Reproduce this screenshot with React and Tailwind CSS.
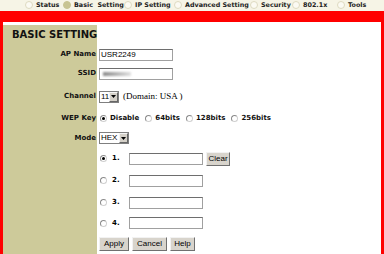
import React from 'react';

const navItems = [
  { label: 'Status', w: 'w-[38px]' },
  { label: 'Basic  Setting', w: 'w-[61px]', active: true },
  { label: 'IP Setting', w: 'w-[50px]' },
  { label: 'Advanced Setting', w: 'w-[76px]' },
  { label: 'Security', w: 'w-[42px]' },
  { label: '802.1x', w: 'w-[45px]' },
  { label: 'Tools', w: 'w-[40px]' },
];

const Radio = ({ checked }) => (
  <span className="w-[7px] h-[7px] rounded-full border border-[#8a8a8a] border-r-[#d0d0d0] border-b-[#d0d0d0] bg-white flex items-center justify-center shrink-0">
    {checked && <span className="w-[3px] h-[3px] rounded-full bg-black" />}
  </span>
);

const TextBox = ({ children, className = '' }) => (
  <div
    className={`w-[74px] h-[12px] bg-white border border-[#a0a0a0] border-t-[#6e6e6e] flex items-center pl-[1px] text-[8px] leading-none text-black font-['Liberation_Sans',sans-serif] ${className}`}
  >
    {children}
  </div>
);

const Select = ({ value, w }) => (
  <div className={`${w} h-[12px] bg-white border border-[#7f7f7f] flex items-center justify-between text-[8px] leading-none font-['Liberation_Sans',sans-serif]`}>
    <span className="pl-[1px]">{value}</span>
    <span className="w-[9px] h-[10px] bg-[#d4d0c8] border border-[#f4f4f4] border-r-[#666] border-b-[#666] flex items-center justify-center">
      <svg width="5" height="3" viewBox="0 0 5 3">
        <path d="M0 0h5L2.5 3z" fill="#000" />
      </svg>
    </span>
  </div>
);

const Btn = ({ children, w }) => (
  <div className={`${w} h-[14px] bg-[#d8d4cc] border border-[#f2f2f2] border-r-[#707070] border-b-[#707070] flex items-center justify-center text-[8px] leading-none text-black font-['Liberation_Sans',sans-serif]`}>
    {children}
  </div>
);

const Row = ({ label, h, children }) => (
  <div className={`flex ${h}`}>
    <div className="w-[94px] bg-[#cdca9a] flex items-center justify-end pr-[1px] text-[7px] font-bold text-[#111] font-['DejaVu_Sans',sans-serif]">
      {label}
    </div>
    <div className="flex-1 flex items-center pl-[2px]">{children}</div>
  </div>
);

const WepOpt = ({ label, checked }) => (
  <span className="flex items-center gap-[3px] mr-[6px]">
    <Radio checked={checked} />
    <span>{label}</span>
  </span>
);

const KeyRow = ({ n, h, checked, clear }) => (
  <Row h={h}>
    <div className="flex items-center">
      <span className="ml-[1px]">
        <Radio checked={checked} />
      </span>
      <span className="w-[22px] pl-[5px] text-[7px] font-bold font-['DejaVu_Sans',sans-serif]">{n}.</span>
      <TextBox />
      {clear && (
        <span className="ml-[3px]">
          <Btn w="w-[24px]">Clear</Btn>
        </span>
      )}
    </div>
  </Row>
);

export default function App() {
  return (
    <div className="w-[384px] h-[254px] bg-[#ff0000] overflow-hidden">
      {/* menu bar */}
      <div className="h-[11px] bg-[#f6f4e6] flex items-center pl-[25px] text-[6.4px] font-bold text-[#222] font-['DejaVu_Sans',sans-serif]">
        {navItems.map((it) => (
          <div key={it.label} className={`${it.w} flex items-center gap-[3px] shrink-0`}>
            <span
              className={`w-[8px] h-[8px] rounded-full border shrink-0 ${
                it.active ? 'bg-[#c8c492] border-[#c8c492]' : 'bg-[#fbfaf3] border-[#dedac0]'
              }`}
            />
            <span className="whitespace-pre">{it.label}</span>
          </div>
        ))}
      </div>

      <div className="pt-[11px] pl-[3px] pr-[3px]">
        <div className="bg-white pt-[3px] h-[232px]">
          <div className="flex h-[20px]">
            <div className="w-[94px] bg-[#cdca9a] pl-[9px] pt-[2px] text-[10px] font-bold text-[#111] font-['DejaVu_Sans',sans-serif] whitespace-nowrap">
              BASIC SETTING
            </div>
            <div className="flex-1" />
          </div>

          <Row label="AP Name" h="h-[19px]">
            <TextBox>USR2249</TextBox>
          </Row>
          <Row label="SSID" h="h-[19px]">
            <TextBox>
              <span className="ml-[2px] w-[28px] h-[4px] bg-gradient-to-r from-[#8a8a8a] to-[#e0e0e0] blur-[1px]" />
            </TextBox>
          </Row>
          <Row label="Channel" h="h-[27px]">
            <Select value="11" w="w-[20px]" />
            <span className="ml-[4px] text-[9px] text-black font-['Liberation_Serif',serif]">(Domain: USA )</span>
          </Row>
          <Row label="WEP Key" h="h-[17px]">
            <div className="flex items-center ml-[1px] text-[7px] font-bold text-[#111] font-['DejaVu_Sans',sans-serif]">
              <WepOpt label="Disable" checked />
              <WepOpt label="64bits" />
              <WepOpt label="128bits" />
              <WepOpt label="256bits" />
            </div>
          </Row>
          <Row label="Mode" h="h-[22px]">
            <Select value="HEX" w="w-[30px]" />
          </Row>
          <KeyRow n="1" h="h-[19px]" checked clear />
          <KeyRow n="2" h="h-[25px]" />
          <KeyRow n="3" h="h-[19px]" />
          <KeyRow n="4" h="h-[22px]" />
          <Row h="h-[20px]">
            <div className="flex items-center gap-[3px]">
              <Btn w="w-[30px]">Apply</Btn>
              <Btn w="w-[35px]">Cancel</Btn>
              <Btn w="w-[25px]">Help</Btn>
            </div>
          </Row>
        </div>
      </div>
    </div>
  );
}
